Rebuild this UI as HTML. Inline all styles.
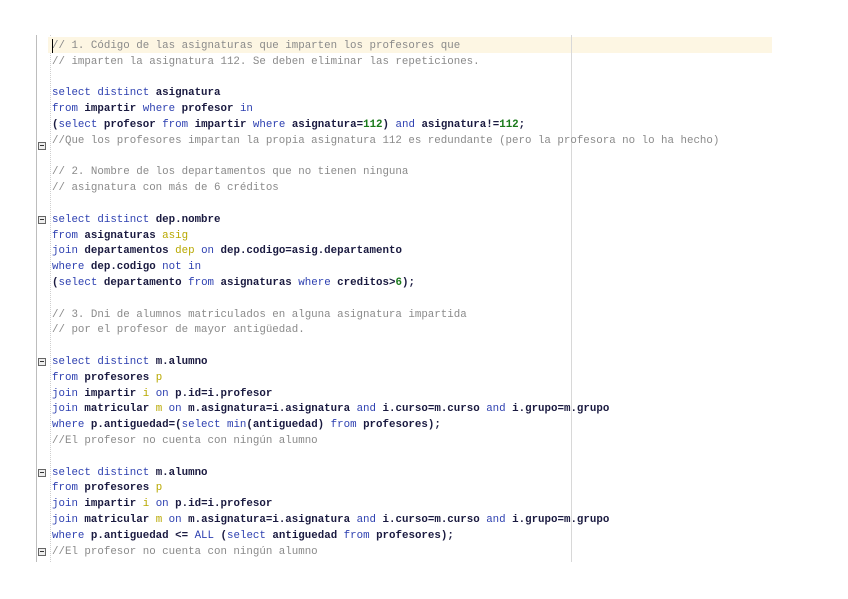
<!DOCTYPE html>
<html><head><meta charset="utf-8"><style>
html,body{margin:0;padding:0;background:#fff;width:848px;height:599px;overflow:hidden}
.ed{position:absolute;left:0;top:0;width:848px;height:599px}
.gut{position:absolute;left:36px;top:35px;width:1px;height:527px;background:#bdbdbd}
.dot{position:absolute;left:50px;top:35px;height:527px;border-left:1px dotted #cfcfcf}
.margin{position:absolute;left:571px;top:35px;width:1px;height:527px;background:#d8d8d8}
.hl{position:absolute;left:48px;top:37px;width:724px;height:16px;background:#fdf6e3}
.caret{position:absolute;left:52px;top:39px;width:1px;height:14px;background:#000}
.code{position:absolute;left:52px;top:39px;font-family:"Liberation Mono","Courier New",monospace;font-size:10.8px;line-height:15.8px;white-space:pre;color:#1a1a40}
.k{color:#2c3fb0}
.c{color:#8a8a8a}
.n{color:#1a7a1a;font-weight:bold}
.i{color:#1a1a40;font-weight:bold}
.a{color:#b8a800}
.f{position:absolute;left:38px;width:8px;height:8px;border:1px solid #666;background:#eee;box-sizing:border-box}
.f:after{content:"";position:absolute;left:1px;top:2px;width:4px;height:1px;background:#333}
</style></head><body><div class="ed">
<div class="gut"></div><div class="dot"></div><div class="hl"></div><div class="margin"></div>
<div class="f" style="top:142px"></div>
<div class="f" style="top:216px"></div>
<div class="f" style="top:358px"></div>
<div class="f" style="top:469px"></div>
<div class="f" style="top:548px"></div>
<div class="code"><span class="c">// 1. Código de las asignaturas que imparten los profesores que</span>
<span class="c">// imparten la asignatura 112. Se deben eliminar las repeticiones.</span>

<span class="k">select distinct</span> <span class="i">asignatura</span>
<span class="k">from</span> <span class="i">impartir</span> <span class="k">where</span> <span class="i">profesor</span> <span class="k">in</span>
<span class="i">(</span><span class="k">select</span> <span class="i">profesor</span> <span class="k">from</span> <span class="i">impartir</span> <span class="k">where</span> <span class="i">asignatura=</span><span class="n">112</span><span class="i">)</span> <span class="k">and</span> <span class="i">asignatura!=</span><span class="n">112</span><span class="i">;</span>
<span class="c">//Que los profesores impartan la propia asignatura 112 es redundante (pero la profesora no lo ha hecho)</span>

<span class="c">// 2. Nombre de los departamentos que no tienen ninguna</span>
<span class="c">// asignatura con más de 6 créditos</span>

<span class="k">select distinct</span> <span class="i">dep.nombre</span>
<span class="k">from</span> <span class="i">asignaturas</span> <span class="a">asig</span>
<span class="k">join</span> <span class="i">departamentos</span> <span class="a">dep</span> <span class="k">on</span> <span class="i">dep.codigo=asig.departamento</span>
<span class="k">where</span> <span class="i">dep.codigo</span> <span class="k">not in</span>
<span class="i">(</span><span class="k">select</span> <span class="i">departamento</span> <span class="k">from</span> <span class="i">asignaturas</span> <span class="k">where</span> <span class="i">creditos&gt;</span><span class="n">6</span><span class="i">);</span>

<span class="c">// 3. Dni de alumnos matriculados en alguna asignatura impartida</span>
<span class="c">// por el profesor de mayor antigüedad.</span>

<span class="k">select distinct</span> <span class="i">m.alumno</span>
<span class="k">from</span> <span class="i">profesores</span> <span class="a">p</span>
<span class="k">join</span> <span class="i">impartir</span> <span class="a">i</span> <span class="k">on</span> <span class="i">p.id=i.profesor</span>
<span class="k">join</span> <span class="i">matricular</span> <span class="a">m</span> <span class="k">on</span> <span class="i">m.asignatura=i.asignatura</span> <span class="k">and</span> <span class="i">i.curso=m.curso</span> <span class="k">and</span> <span class="i">i.grupo=m.grupo</span>
<span class="k">where</span> <span class="i">p.antiguedad=(</span><span class="k">select min</span><span class="i">(antiguedad)</span> <span class="k">from</span> <span class="i">profesores);</span>
<span class="c">//El profesor no cuenta con ningún alumno</span>

<span class="k">select distinct</span> <span class="i">m.alumno</span>
<span class="k">from</span> <span class="i">profesores</span> <span class="a">p</span>
<span class="k">join</span> <span class="i">impartir</span> <span class="a">i</span> <span class="k">on</span> <span class="i">p.id=i.profesor</span>
<span class="k">join</span> <span class="i">matricular</span> <span class="a">m</span> <span class="k">on</span> <span class="i">m.asignatura=i.asignatura</span> <span class="k">and</span> <span class="i">i.curso=m.curso</span> <span class="k">and</span> <span class="i">i.grupo=m.grupo</span>
<span class="k">where</span> <span class="i">p.antiguedad &lt;=</span> <span class="k">ALL</span> <span class="i">(</span><span class="k">select</span> <span class="i">antiguedad</span> <span class="k">from</span> <span class="i">profesores);</span>
<span class="c">//El profesor no cuenta con ningún alumno</span></div>
<div class="caret"></div>
</div></body></html>
